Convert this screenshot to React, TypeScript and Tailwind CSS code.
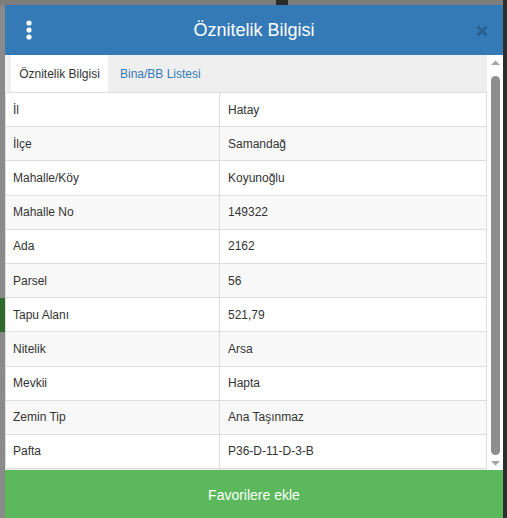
import React from "react";

const rows: [string, string][] = [
  ["İl", "Hatay"],
  ["İlçe", "Samandağ"],
  ["Mahalle/Köy", "Koyunoğlu"],
  ["Mahalle No", "149322"],
  ["Ada", "2162"],
  ["Parsel", "56"],
  ["Tapu Alanı", "521,79"],
  ["Nitelik", "Arsa"],
  ["Mevkii", "Hapta"],
  ["Zemin Tip", "Ana Taşınmaz"],
  ["Pafta", "P36-D-11-D-3-B"],
];

function Kebab() {
  return (
    <svg width="8" height="20" viewBox="0 0 8 20" fill="#fff">
      <circle cx="4" cy="3" r="2.6" />
      <circle cx="4" cy="10" r="2.6" />
      <circle cx="4" cy="17" r="2.6" />
    </svg>
  );
}

function CloseX() {
  return (
    <svg width="12" height="12" viewBox="0 0 12 12">
      <path
        d="M1.5 1.5 L10.5 10.5 M10.5 1.5 L1.5 10.5"
        stroke="#2a5f90"
        strokeWidth="3"
        strokeLinecap="butt"
      />
    </svg>
  );
}

function ScrollBar() {
  return (
    <div className="flex w-[16px] flex-col items-center bg-white pt-[5px] pb-[4px]">
      <svg width="9" height="6" viewBox="0 0 9 6">
        <polygon points="0,5 4.5,0.5 9,5" fill="#a3a3a3" />
      </svg>
      <div className="mt-[10px] mb-[5px] w-[9px] flex-1 rounded-full bg-[#8e8e8e]" />
      <svg width="9" height="6" viewBox="0 0 9 6">
        <polygon points="0,1 9,1 4.5,5.5" fill="#a3a3a3" />
      </svg>
    </div>
  );
}

export default function App() {
  return (
    <div
      className="relative h-[518px] w-[507px] overflow-hidden bg-[#3a3a3a]"
      style={{ fontFamily: '"Liberation Sans", Arial, sans-serif' }}
    >
      {/* map scraps peeking around the dialog */}
      <div className="absolute left-0 top-0 h-full w-[5px] bg-[#8a8a8a]" />
      <div className="absolute left-0 top-[298px] h-[34px] w-[5px] bg-[#2f6a2c]" />
      <div className="absolute left-0 top-0 h-[5px] w-full bg-[#7d7d7d]" />
      <div className="absolute left-[276px] top-0 h-[5px] w-[12px] bg-[#2a2a2a]" />
      <div className="absolute right-0 top-0 h-full w-[4px] bg-[#2e2e2e]" />

      <div className="relative ml-[5px] mt-[5px] flex w-[498px] flex-col">
        {/* header */}
        <div className="relative flex h-[50px] items-center justify-center bg-[#337ab7]">
          <div className="absolute left-[20px] top-[15px]">
            <Kebab />
          </div>
          <span className="text-[18px] text-white">Öznitelik Bilgisi</span>
          <div className="absolute right-[15px] top-[20px]">
            <CloseX />
          </div>
        </div>

        {/* body */}
        <div className="flex h-[415px] flex-row">
          <div className="flex w-[482px] flex-col bg-[#efefef]">
            <div className="flex h-[38px] shrink-0 items-stretch border-b border-[#dddddd] pl-[6px]">
              <div className="flex w-[97px] items-center justify-center bg-white text-[12px] text-[#333333]">
                Öznitelik Bilgisi
              </div>
              <div className="flex items-center pl-[12px] text-[12px] text-[#337ab7]">
                Bina/BB Listesi
              </div>
            </div>
            <div className="flex flex-col border-l border-r border-[#dddddd] bg-white">
              {rows.map(([k, v], i) => (
                <div
                  key={k}
                  className={`flex h-[34.2px] shrink-0 border-b border-[#dddddd] text-[12px] text-[#333333] ${
                    i % 2 === 1 ? "bg-[#f9f9f9]" : "bg-white"
                  }`}
                >
                  <div className="flex w-[214px] items-center border-r border-[#dddddd] pl-[7px]">
                    {k}
                  </div>
                  <div className="flex flex-1 items-center pl-[8px]">{v}</div>
                </div>
              ))}
            </div>
          </div>
          <ScrollBar />
        </div>

        {/* footer */}
        <div className="flex h-[50px] items-start justify-center bg-[#5cb85c] pt-[15px] text-[14px] text-white">
          Favorilere ekle
        </div>
      </div>
    </div>
  );
}
